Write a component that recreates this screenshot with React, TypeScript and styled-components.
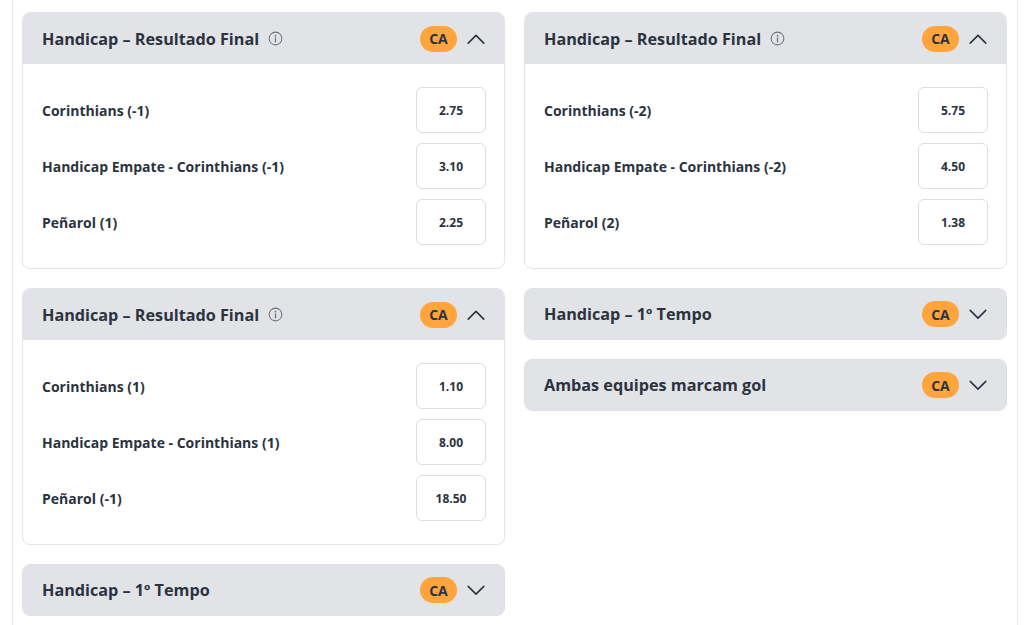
import styled, { createGlobalStyle } from "styled-components";

type Odd = { label: string; price: string };
type Market = { title: string; info?: boolean; odds?: Odd[] };

const leftColumn: Market[] = [
  {
    title: "Handicap – Resultado Final",
    info: true,
    odds: [
      { label: "Corinthians (-1)", price: "2.75" },
      { label: "Handicap Empate - Corinthians (-1)", price: "3.10" },
      { label: "Peñarol (1)", price: "2.25" },
    ],
  },
  {
    title: "Handicap – Resultado Final",
    info: true,
    odds: [
      { label: "Corinthians (1)", price: "1.10" },
      { label: "Handicap Empate - Corinthians (1)", price: "8.00" },
      { label: "Peñarol (-1)", price: "18.50" },
    ],
  },
  { title: "Handicap – 1º Tempo" },
];

const rightColumn: Market[] = [
  {
    title: "Handicap – Resultado Final",
    info: true,
    odds: [
      { label: "Corinthians (-2)", price: "5.75" },
      { label: "Handicap Empate - Corinthians (-2)", price: "4.50" },
      { label: "Peñarol (2)", price: "1.38" },
    ],
  },
  { title: "Handicap – 1º Tempo" },
  { title: "Ambas equipes marcam gol" },
];

const InfoIcon = () => (
  <svg width="15" height="15" viewBox="0 0 16 16" fill="none">
    <circle cx="8" cy="8" r="6.8" stroke="#6b7280" strokeWidth="1.1" />
    <circle cx="8" cy="5" r="0.9" fill="#6b7280" />
    <path d="M8 7.2v4.4" stroke="#6b7280" strokeWidth="1.3" strokeLinecap="round" />
  </svg>
);

const Chevron = ({ open }: { open: boolean }) => (
  <svg width="22" height="22" viewBox="0 0 24 24" fill="none">
    <path
      d={open ? "M3.5 16.5 12 8l8.5 8.5" : "M3.5 8 12 16.5 20.5 8"}
      stroke="#2b3340"
      strokeWidth="1.7"
      strokeLinecap="round"
      strokeLinejoin="round"
    />
  </svg>
);

const MarketCard = ({ market }: { market: Market }) => {
  const open = !!market.odds;
  return (
    <Card $open={open}>
      <CardHeader $open={open}>
        <Title>
          {market.title}
          {market.info && <InfoIcon />}
        </Title>
        <Actions>
          <Badge>CA</Badge>
          <Chevron open={open} />
        </Actions>
      </CardHeader>
      {market.odds && (
        <CardBody>
          {market.odds.map((o) => (
            <OddRow key={o.label}>
              <OddLabel>{o.label}</OddLabel>
              <PriceButton>{o.price}</PriceButton>
            </OddRow>
          ))}
        </CardBody>
      )}
    </Card>
  );
};

const App = () => {
  return (
    <>
      <GlobalStyle />
      <Page>
        <Column>
          {leftColumn.map((m, i) => (
            <MarketCard key={i} market={m} />
          ))}
        </Column>
        <Column>
          {rightColumn.map((m, i) => (
            <MarketCard key={i} market={m} />
          ))}
        </Column>
      </Page>
    </>
  );
};

const GlobalStyle = createGlobalStyle`
  body {
    margin: 0;
    background: #ffffff;
    font-family: "Open Sans", "Noto Sans", sans-serif;
    color: #2b3340;
  }
`;

const Page = styled.div`
  display: grid;
  grid-template-columns: 1fr 1fr;
  column-gap: 19px;
  align-items: start;
  margin-left: 12px;
  width: 1006px;
  box-sizing: border-box;
  min-height: 625px;
  padding: 12px 10px 0 9px;
  border-left: 1px solid #e6e6e8;
  border-right: 1px solid #e6e6e8;
`;

const Column = styled.div`
  display: flex;
  flex-direction: column;
  gap: 19px;
`;

const Card = styled.div<{ $open: boolean }>`
  border-radius: 8px;
  border: 1px solid ${(p) => (p.$open ? "#e4e5e8" : "#dfe0e4")};
  background: ${(p) => (p.$open ? "#ffffff" : "#e2e3e7")};
  overflow: hidden;
`;

const CardHeader = styled.div<{ $open: boolean }>`
  display: flex;
  align-items: center;
  justify-content: space-between;
  height: ${(p) => (p.$open ? 51 : 50)}px;
  padding: 0 17px 0 19px;
  background: #e2e3e7;
`;

const Title = styled.div`
  display: flex;
  align-items: center;
  gap: 9px;
  font-size: 16.2px;
  font-weight: 700;
  color: #2b3340;
`;

const Actions = styled.div`
  display: flex;
  align-items: center;
  gap: 8px;
`;

const Badge = styled.span`
  display: inline-flex;
  align-items: center;
  justify-content: center;
  width: 37px;
  height: 26px;
  border-radius: 13px;
  background: #ffa53c;
  font-size: 14px;
  font-weight: 700;
  color: #2b3340;
`;

const CardBody = styled.div`
  display: flex;
  flex-direction: column;
  gap: 10px;
  padding: 23px 18px 23px 19px;
`;

const OddRow = styled.div`
  display: flex;
  align-items: center;
  justify-content: space-between;
`;

const OddLabel = styled.span`
  font-size: 14px;
  font-weight: 700;
  color: #2b3340;
`;

const PriceButton = styled.button`
  width: 70px;
  height: 46px;
  border: 1px solid #dcdde1;
  border-radius: 6px;
  background: #ffffff;
  font-family: inherit;
  font-size: 12px;
  font-weight: 700;
  color: #2b3340;
  cursor: pointer;
`;

export default App;
